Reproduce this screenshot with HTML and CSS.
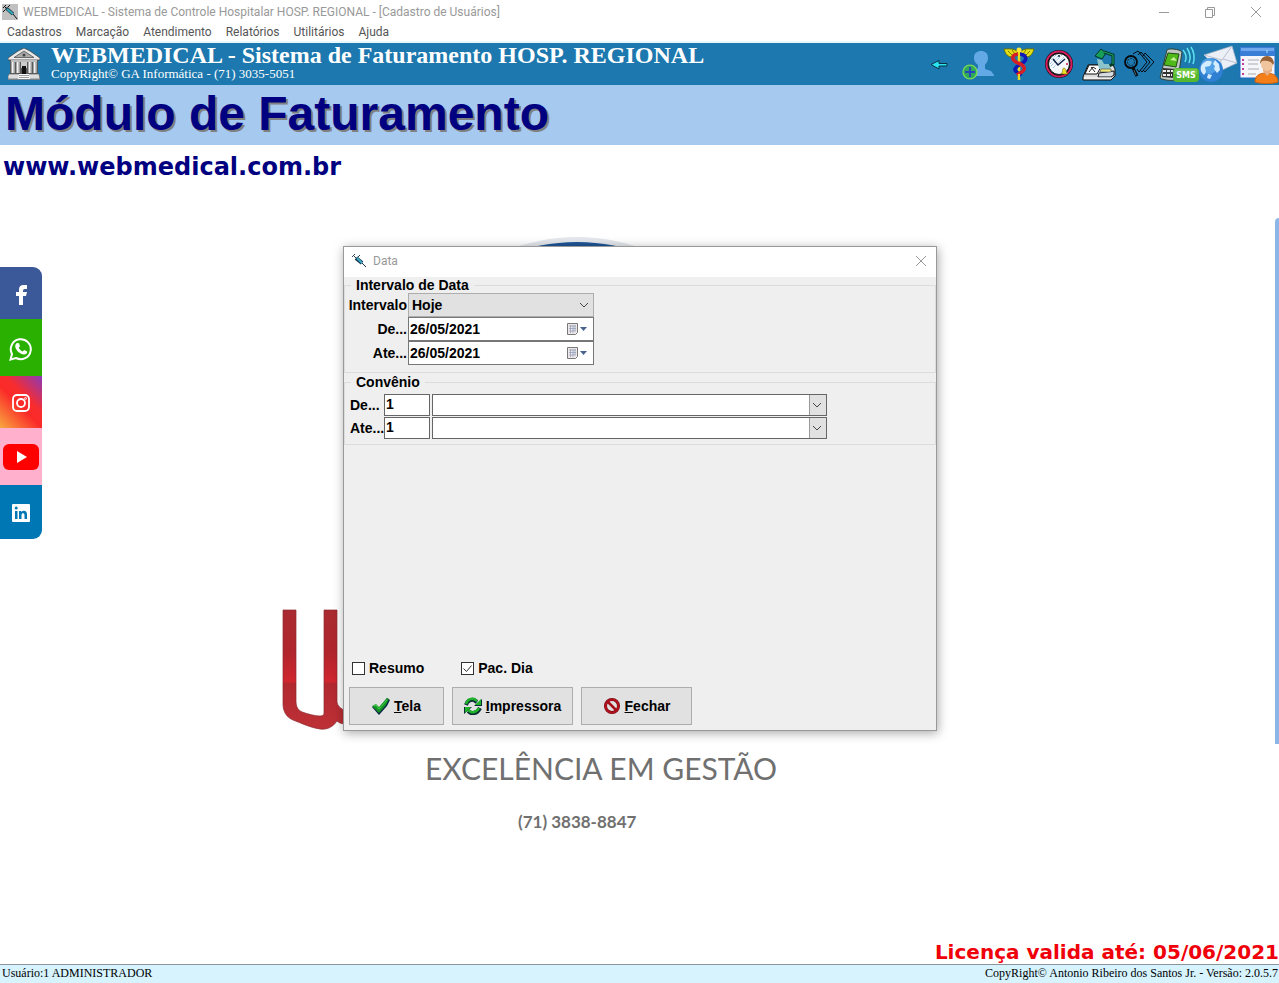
FILE: index.html
```html
<!DOCTYPE html>
<html lang="pt-BR">
<head>
<meta charset="utf-8">
<title>WEBMEDICAL - Sistema de Controle Hospitalar</title>
<link rel="stylesheet" href="styles.css">
</head>
<body>
<header class="titlebar">
  <svg class="app-icon" viewBox="0 0 16 16"><rect width="16" height="16" fill="#c0c0c0"/><path d="M1 4L4 1M2 2l3 3M1 8l2-2M8 1L6 3" stroke="#111"/><path d="M4 4l7 6" stroke="#234" stroke-width="3.500"/><path d="M5 5l6 5" stroke="#2fb0bf" stroke-width="2"/><path d="M11 10l4 5" stroke="#111"/></svg>
  <span class="titlebar-text">WEBMEDICAL - Sistema de Controle Hospitalar HOSP. REGIONAL - [Cadastro de Usuários]</span>
  <div class="window-controls">
    <button aria-label="Minimizar"><svg viewBox="0 0 12 12"><path d="M1 6.500h10"/></svg></button>
    <button aria-label="Restaurar"><svg viewBox="0 0 12 12"><path d="M1.500 3.500h7v8h-7zM3.500 3.500v-2h7v8h-2"/></svg></button>
    <button aria-label="Fechar janela"><svg viewBox="0 0 12 12"><path d="M1 1l10 10M11 1L1 11"/></svg></button>
  </div>
</header>
<nav class="menubar">
  <button>Cadastros</button><button>Marcação</button><button>Atendimento</button><button>Relatórios</button><button>Utilitários</button><button>Ajuda</button>
</nav>
<section class="banner">
  <svg class="bank" viewBox="0 0 32 32"><path d="M0 10L10 3l6-3 6 3 10 7v2H0z" fill="#e9e9e9" stroke="#444" stroke-width=".8"/><path d="M6 9.500L16 3l10 6.500z" fill="#aaa" stroke="#555" stroke-width=".8"/><circle cx="16" cy="7" r="1.500" fill="#444"/><path d="M2 12h28v14H2z" fill="#5b5b5b"/><path d="M3 13h26" stroke="#ddd" stroke-width="1.500"/><path d="M5 14v11M10 14v11M22 14v11M27 14v11" stroke="#f2f2f2" stroke-width="3"/><path d="M6 14v11M11 14v11M23 14v11M28 14v11" stroke="#999"/><path d="M13 14h6v6h-6z" fill="#ccc"/><path d="M14 18h4v8h-4z" fill="#111"/><path d="M1 26h11v5H0v-3zM20 26h11l1 5H20z" fill="#ddd" stroke="#555" stroke-width=".6"/><path d="M11 26h10l1 5H10z" fill="#fafafa"/><path d="M11 27.500h10M11 29.500h10M0 31.500h32" stroke="#888" stroke-width=".8"/></svg>
  <div class="banner-text">
    <h1>WEBMEDICAL - Sistema de Faturamento HOSP. REGIONAL</h1>
    <p>CopyRight© GA Informática - (71) 3035-5051</p>
  </div>
  <div class="toolbar">
    <button aria-label="Voltar"><svg viewBox="0 0 40 40"><path d="M12 20.500l8-4v3h8v2.500h-8v3z" fill="#2be4f2" stroke="#063243"/></svg></button>
    <button aria-label="Novo usuário"><svg viewBox="0 0 40 40"><path d="M15 14c0-5 3-7 7-7s7 2 7 7c0 4-2 5-3 7v4l6 2 3 4v1H16V26l3-2v-3c-2-2-4-3-4-7z" fill="#62a9e6"/><circle cx="11" cy="28" r="7" fill="#2ea85a" stroke="#86e050" stroke-width="1.200"/><path d="M11 23v10M6 28h10" stroke="#2746bd" stroke-width="2"/></svg></button>
    <button aria-label="Clínica"><svg viewBox="0 0 40 40"><path d="M19 8C15 4 10 5 5 5c1 3 2 7 7 8l6-2zM21 8c4-4 9-3 14-3-1 3-2 7-7 8l-6-2z" fill="#e4de18" stroke="#6d7400"/><path d="M9 7l4 4M13 6l3 4M31 7l-4 4M27 6l-3 4" stroke="#7b7d00"/><path d="M20 6v30" stroke="#eddb1b" stroke-width="2.500"/><circle cx="20" cy="6" r="2.500" fill="#ffe838"/><g fill="none" stroke-width="3.500"><path d="M21 10c7 1 8 6 1 10s-8 6-3 9l3 3" stroke="#1018b8"/><path d="M19 10c-7 1-7 6 0 9 8 3 8 7 2 10l-3 2" stroke="#d61f25"/></g><path d="M20 10v5M20 30v6" stroke="#eddb1b" stroke-width="2"/></svg></button>
    <button aria-label="Agenda"><svg viewBox="0 0 40 40"><circle cx="20" cy="20" r="14" fill="#111"/><circle cx="20" cy="20" r="12.500" fill="none" stroke="#d51e60" stroke-width="2"/><circle cx="20" cy="20" r="10.500" fill="#f5f8fb" stroke="#111"/><path d="M12 16l5-5M11 20l9-9M12 22l11-11M14 24L25 13" stroke="#73b2dc" stroke-dasharray="1 1"/><path d="M14 15l5 6 7-6" fill="none" stroke="#124" stroke-width="1.500"/><circle cx="20" cy="12" r="1" fill="#123"/><circle cx="28" cy="20" r="1" fill="#c14"/><path d="M22 30c2-1 1-6 3-6s2 5 4 6z" fill="#eee329" stroke="#765d05" stroke-width=".6"/></svg></button>
    <button aria-label="Consultório"><svg viewBox="0 0 40 40"><path d="M9 21h25l2 4v7l-4 4H4v-3z" fill="#ddd" stroke="#111"/><path d="M10 21h13l-5 9H6z" fill="#fff" stroke="#111"/><path d="M10 28l4-5 3 2M12 23l4 5" stroke="#222" fill="none"/><path d="M20 29l15-2v4l-3 2H19z" fill="#d6dce1" stroke="#111"/><path d="M16 12l6-7 5 4-4 6z" fill="#16a05a" stroke="#032"/><path d="M25 8l9 3v9l-4 2" fill="none" stroke="#063b24" stroke-width="3"/><path d="M25 8l9 3v9" fill="none" stroke="#18a965"/><path d="M18 15l5 1 2 4h5l2 5H20z" fill="#8bc4cb"/><path d="M22 25h10v3H21z" fill="#f0e978" stroke="#444" stroke-width=".6"/><path d="M5 34h27" stroke="#fff"/></svg></button>
    <button aria-label="Pesquisar"><svg viewBox="0 0 40 40" fill="none" stroke="#06090e"><path d="M14 10l5-3 9 11-8 10-2-3M19 11l3-3 9 10-8 10-2-2M24 12l2-3 9 9-9 10-2-2"/><circle cx="12" cy="18" r="6" stroke-width="1.800"/><circle cx="12" cy="18" r="3.500" stroke-width=".7" stroke-dasharray="2 1"/><path d="M14 24l4 8" stroke-width="3"/><path d="M15 26l2 5" stroke="#688" stroke-width=".7"/></svg></button>
    <button aria-label="Enviar SMS"><svg viewBox="0 0 40 40"><path d="M8 6c1-2 13-1 15 2l-3 20-4 8C12 37 4 36 1 34z" fill="#bfc8c4" stroke="#304030"/><path d="M9 9l11 1-3 13-12-2z" fill="#4fb81b" stroke="#214d11"/><path d="M11 16l4-3 3 4z" fill="#c7f298"/><path d="M4 24l13 1-2 9-12-1z" fill="#333"/><path d="M4 27h10M4 31h9" stroke="#eee" stroke-width="2" stroke-dasharray="3 1"/><g fill="none" stroke="#5fe0ee" stroke-width="1.500"><path d="M24 6q5 6 2 12M28 4q5 8 2 15M32 3q5 8 2 17"/></g><path d="M26 6q5 6 2 12M30 3q5 8 2 16" stroke="#167c9f" fill="none"/><rect x="14" y="24" width="26" height="14" rx="4" fill="#56b82c"/><path d="M16 25h22v5H15z" fill="#77cb4a"/><text x="27" y="34" text-anchor="middle" class="sms-label">SMS</text></svg></button>
    <button aria-label="Enviar e-mail"><svg viewBox="0 0 40 40"><path d="M5 11L33 2l5 17-17 8z" fill="#eceff5" stroke="#a7b3c9" stroke-width=".7"/><path d="M5 11l18 5L33 2M38 19l-14-4M21 27l1-11" fill="none" stroke="#b9c2d2"/><circle cx="12" cy="26" r="12" fill="#2f7fd2"/><circle cx="10" cy="22" r="8" fill="#68b5f2" opacity=".6"/><path d="M2 22c4-6 8-6 11-4l-2 4-5 1 1 5-2 3c-3-3-4-5-3-9zM16 16l4 4 1 6-3 3-3-4 1-3-2-2zM9 30l4 1-2 4-3-1z" fill="#d4ecff"/></svg></button>
    <button aria-label="Cadastro"><svg viewBox="0 0 40 40"><rect x="1" y="3" width="35" height="31" rx="1" fill="#f5f6fb" stroke="#2368c5"/><path d="M1 3h35v9H1z" fill="#397fd7"/><path d="M2 4h33v3H2z" fill="#70a8eb"/><path d="M28 6v3" stroke="#b9e3ff"/><g stroke="#c13b9b" stroke-width="2"><path d="M3 16h2M3 20h2M3 25h2M3 30h2"/></g><path d="M9 16h11M9 20h10M9 25h11M9 30h8" stroke="#aaa"/><path d="M16 38c0-6 4-9 11-9s12 3 12 9c-6 2-17 2-23 0z" fill="#f47f18" stroke="#ce6110"/><path d="M24 27l4 5 5-5v-5h-9z" fill="#e8ae83"/><ellipse cx="28" cy="20" rx="6" ry="7" fill="#f0c59e"/><path d="M21 20c0-10 13-11 14-1l-1 2c-2-4-5-5-11-4z" fill="#986136"/></svg></button>
  </div>
</section>
<section class="module"><h2>Módulo de Faturamento</h2></section>
<main class="desktop">
  <a class="site" href="#">www.webmedical.com.br</a>

  <svg class="artwork" viewBox="0 0 600 520"><circle cx="297" cy="198" r="191" fill="#e4e8ec"/><circle cx="297" cy="200" r="188" fill="#1e5596"/>
    <defs><linearGradient id="red" x1="0" y1="0" x2="0" y2="1"><stop offset="0" stop-color="#a92b31"/><stop offset=".35" stop-color="#b0262c"/><stop offset=".6" stop-color="#d0262f"/><stop offset=".62" stop-color="#b1292f"/><stop offset="1" stop-color="#bd3036"/></linearGradient></defs>
    <path d="M3 380h13v91c0 6 2 9 6 11 6 2 13 4 18 4 3 0 4-1 4-3V380h13v91c0 5 4 8 9 10v13c-4 0-7-1-9-3-4 6-10 9-17 8-9-1-19-6-27-9C6 487 3 481 3 474z" fill="url(#red)" stroke="#8c2b30" stroke-width=".7"/></svg>
  <div class="slogan"><p class="slogan-main">EXCELÊNCIA EM GESTÃO</p><p class="slogan-phone">(71) 3838-8847</p></div>
  <div class="side-panel"></div>

  <nav class="social">
    <a class="facebook" href="#" aria-label="Facebook"><svg viewBox="0 0 24 24" fill="#fff"><path d="M10 22v-9H7V9h3V7c0-4 2-5 5-5h3v4h-2c-2 0-2 1-2 3h4l-1 4h-3v9z"/></svg></a>
    <a class="whatsapp" href="#" aria-label="WhatsApp"><svg viewBox="0 0 24 24"><path d="M1.500 22.500L3 17a10 10 0 1 1 4 4z" fill="none" stroke="#fff" stroke-width="2"/><path d="M8 6l2 .3 1 3-1.300 1.500c1 2 2.300 3 4 3.800l1.500-1.500 3 1.400c.2 2-1.500 3-3 3-5-.5-9-5-9-8.500 0-1 .8-2.500 1.800-3z" fill="#fff"/></svg></a>
    <a class="instagram" href="#" aria-label="Instagram"><svg viewBox="0 0 24 24" fill="none" stroke="#fff" stroke-width="1.800"><rect x="4" y="4" width="16" height="16" rx="4"/><circle cx="12" cy="12" r="4"/><circle cx="16.500" cy="7.500" r=".4"/></svg></a>
    <a class="youtube" href="#" aria-label="YouTube"><svg viewBox="0 0 36 26"><rect width="36" height="26" rx="6" fill="#f00"/><path d="M14 7l10 6-10 6z" fill="#fff"/></svg></a>
    <a class="linkedin" href="#" aria-label="LinkedIn"><svg viewBox="0 0 24 24"><rect x="3" y="3" width="18" height="18" rx="1" fill="#fff"/><path d="M6 10h2.500v8H6zM10 10h2.300v1.200c1.700-2.300 5.700-1.700 5.700 2V18h-2.500v-4c0-2.300-3-2.300-3 0v4H10z" fill="#0077b5"/><circle cx="7.200" cy="7" r="1.500" fill="#0077b5"/></svg></a>
  </nav>

  <section class="dialog" role="dialog" aria-labelledby="dialog-title">
    <header class="dialog-header">
      <svg class="dialog-icon" viewBox="0 0 16 16"><path d="M1 4l3-3M2 2l4 4M4 7l5-5" stroke="#345"/><path d="M5 5l6 5" stroke="#16364c" stroke-width="4"/><path d="M6 5l5 5" stroke="#38acc4" stroke-width="2"/><path d="M11 10l4 4" stroke="#16364c"/></svg>
      <span id="dialog-title">Data</span>
      <button aria-label="Fechar diálogo"><svg viewBox="0 0 12 12"><path d="M1 1l10 10M11 1L1 11"/></svg></button>
    </header>
    <form class="dialog-body">
      <fieldset class="group period">
        <legend>Intervalo de Data</legend>
        <label for="interval">Intervalo</label>
        <div class="combo combo-gray"><select id="interval"><option>Hoje</option></select><svg viewBox="0 0 10 6"><path d="M1 1l4 4 4-4"/></svg></div>
        <label for="from">De...</label>
        <div class="date"><input id="from" value="26/05/2021"><button type="button" aria-label="Abrir calendário inicial"><svg viewBox="0 0 20 12"><path d="M.5 .5h10v9l-2 2h-8z" fill="#eee9e8" stroke="#777"/><path d="M2 3h7M2 5.500h7M2 8h7M3.500 2v8M6 2v8M8 2v6" stroke="#8d9bb7" stroke-width=".7"/><path d="M13 4h7l-3.500 4z" fill="#47628c"/></svg></button></div>
        <label for="to">Ate...</label>
        <div class="date"><input id="to" value="26/05/2021"><button type="button" aria-label="Abrir calendário final"><svg viewBox="0 0 20 12"><path d="M.5 .5h10v9l-2 2h-8z" fill="#eee9e8" stroke="#777"/><path d="M2 3h7M2 5.500h7M2 8h7M3.500 2v8M6 2v8M8 2v6" stroke="#8d9bb7" stroke-width=".7"/><path d="M13 4h7l-3.500 4z" fill="#47628c"/></svg></button></div>
      </fieldset>
      <fieldset class="group plan">
        <legend>Convênio</legend>
        <label for="plan-from">De...</label>
        <input id="plan-from" class="code" value="1">
        <div class="combo combo-white"><select aria-label="Convênio inicial"><option></option></select><svg viewBox="0 0 10 6"><path d="M1 1l4 4 4-4"/></svg></div>
        <label for="plan-to">Ate...</label>
        <input id="plan-to" class="code" value="1">
        <div class="combo combo-white"><select aria-label="Convênio final"><option></option></select><svg viewBox="0 0 10 6"><path d="M1 1l4 4 4-4"/></svg></div>
      </fieldset>
      <div class="checks">
        <label class="check"><input type="checkbox"><svg viewBox="0 0 13 13"><path d="M2.500 6.500l3 3 5-6"/></svg><span>Resumo</span></label>
        <label class="check"><input type="checkbox" checked><svg viewBox="0 0 13 13"><path d="M2.500 6.500l3 3 5-6"/></svg><span>Pac. Dia</span></label>
      </div>
      <div class="actions">
        <button type="button" class="action-view"><svg viewBox="0 0 18 18"><path d="M0 10l4-2 3 3 8-10 3 2-3 6-8 9z" fill="#0a2348"/><path d="M0 9l4-2 3 3 8-9 2 1-3 6-7 8z" fill="#159424"/><path d="M2 9l2-1 3 4 8-9" fill="none" stroke="#46d84c"/></svg><span><u>T</u>ela</span></button>
        <button type="button" class="action-print"><svg viewBox="0 0 18 18"><g fill="none" stroke="#092b33" stroke-width="4"><path d="M2 8q2-6 8-5l3 2M16 11q-3 6-9 5l-3-2"/></g><path d="M18 2v7h-8zM0 17v-7h8z" fill="#092b33"/><g fill="none" stroke="#1eb42a" stroke-width="2.500"><path d="M2 7q2-6 8-5l3 2M15 11q-3 5-8 4l-3-2"/></g><path d="M17 2v6h-6zM1 16v-6h6z" fill="#1eb42a"/></svg><span><u>I</u>mpressora</span></button>
        <button type="button" class="action-close"><svg viewBox="0 0 18 18" fill="none"><circle cx="9" cy="9" r="6.500" stroke="#720b13" stroke-width="3"/><circle cx="9" cy="9" r="6.500" stroke="#b5121e" stroke-width="2"/><path d="M4 4l10 10" stroke="#a50f19" stroke-width="2.500"/></svg><span><u>F</u>echar</span></button>
      </div>
    </form>
  </section>
  <p class="license">Licença valida até: 05/06/2021</p>
</main>
<footer class="statusbar"><span>Usuário:1 ADMINISTRADOR</span><span>CopyRight© Antonio Ribeiro dos Santos Jr. - Versão: 2.0.5.7</span></footer>
</body>
</html>
```
FILE: styles.css
```css
* { box-sizing: border-box; }
body {
  margin: 0;
  min-height: 100vh;
  display: flex;
  flex-direction: column;
  overflow: hidden;
  background: #fff;
  font-family: Roboto, "Noto Sans", sans-serif;
  font-size: 12px;
}
h1, h2, p { margin: 0; }
button { font: inherit; color: inherit; border: 0; background: none; padding: 0; }
svg { display: block; }

.titlebar { display: flex; align-items: center; height: 23px; padding-left: 2px; color: #999; }
.app-icon { width: 16px; height: 16px; fill: none; }
.titlebar-text { flex: 1; padding-left: 5px; white-space: nowrap; }
.window-controls { display: flex; }
.window-controls button { width: 46px; height: 21px; display: grid; place-items: center; }
.window-controls svg, .dialog-header button svg { width: 12px; height: 12px; fill: none; stroke: #999; }

.menubar { display: flex; height: 20px; border-bottom: 2px solid #e6f9fd; color: #555; }
.menubar button { padding: 0 7px; }

.banner { display: flex; align-items: center; height: 42px; background: #1c78ae; color: #fff; font-family: "Liberation Serif", serif; }
.bank { width: 32px; height: 32px; margin: 0 11px 0 8px; }
.banner-text { flex: 1; padding-bottom: 4px; white-space: nowrap; }
.banner h1 { font-size: 24px; line-height: 24px; }
.banner p { font-size: 13px; line-height: 14px; }
.toolbar { display: flex; }
.toolbar svg { width: 40px; height: 40px; }
.sms-label { font: bold 8px "DejaVu Sans", sans-serif; fill: #fff; }

.module { height: 60px; padding-left: 5px; background: #a6c9ef; }
.module h2 { font: bold 48px/58px "Liberation Sans", sans-serif; color: #000080; text-shadow: 2px 2px 0 #808080; }

.desktop { position: relative; flex: 1; display: flex; flex-direction: column; justify-content: space-between; }
.site { padding: 7px 3px; font: bold 24px/30px "DejaVu Sans", sans-serif; color: #000080; text-decoration: none; }
.license { text-align: right; font: bold 20px/24px "DejaVu Sans", sans-serif; color: #f00008; }

.artwork { position: absolute; left: 280px; top: 85px; width: 600px; height: 520px; }
.slogan { position: absolute; left: 425px; top: 600px; color: #707070; font-family: Lato, sans-serif; white-space: nowrap; }
.slogan-main { font-size: 30px; line-height: 46px; }
.slogan-phone { padding-left: 93px; font-size: 17px; line-height: 62px; font-weight: bold; }
.side-panel { position: absolute; right: 0; top: 73px; width: 4px; height: 526px; background: #8db6e8; border-radius: 4px 0 0 0; }

.social { position: absolute; left: 0; top: 122px; width: 42px; border-radius: 0 9px 9px 0; overflow: hidden; }
.social a { display: grid; place-items: center; height: 52px; padding-top: 2px; }
.social svg { width: 24px; height: 24px; }
.social .facebook { padding-top: 4px; background: #3b5998; }
.social .whatsapp { height: 57px; background: #29b000; }
.social .instagram { background: linear-gradient(45deg, #f9a840, #fa2a28 45%, #f92c2d 60%, #8a3ab9); }
.social .youtube { height: 57px; padding-top: 0; background: #ffb0cc; }
.social .youtube svg { width: 36px; height: 26px; }
.social .linkedin { height: 54px; background: #0077b5; }

.dialog { position: absolute; left: 343px; top: 101px; width: 594px; border: 1px solid #999; background: #efefef; box-shadow: 1px 2px 10px rgba(0, 0, 0, .35); }
.dialog-header { display: flex; align-items: center; height: 30px; padding: 0 9px 2px 7px; background: #fff; color: #999; }
.dialog-icon { width: 16px; height: 16px; fill: none; }
.dialog-header span { flex: 1; padding-left: 6px; }
.dialog-body { font: bold 14px/16px "Liberation Sans", sans-serif; color: #000; }

.group { margin: 0; padding: 0 0 0 5px; border: 1px solid #dcdcdc; display: grid; align-items: center; justify-content: start; }
.group legend { margin-left: 1px; padding: 0 5px; }
.period { grid-template-columns: 58px 186px; grid-auto-rows: 24px; padding-bottom: 7px; }
.period label { display: flex; justify-content: flex-end; padding-right: 1px; }
.plan { margin-top: 1px; grid-template-columns: 34px 46px 397px; grid-auto-rows: 22px; row-gap: 1px; padding-top: 4px; padding-bottom: 5px; }
.plan .combo { margin-left: 2px; }

input, select { width: 100%; min-width: 0; height: 100%; margin: 0; border: 0; border-radius: 0; background: none; font: inherit; color: #000; outline: 0; }
.code { padding: 0 1px 2px; background: #fff; border: 1px solid #666; }
.combo { display: grid; align-items: center; height: 100%; }
.combo select { grid-area: 1 / 1; appearance: none; padding: 0 3px; }
.combo svg { grid-area: 1 / 1; justify-self: end; width: 10px; height: 6px; margin-right: 4px; fill: none; stroke: #444; pointer-events: none; }
.combo-gray { background: #e1e1e1; border: 1px solid #adadad; }
.combo-white { background: linear-gradient(to left, #e1e1e1 16px, #999 16px, #999 17px, #fff 17px); border: 1px solid #666; }
.date { display: flex; align-items: center; height: 100%; padding-right: 6px; background: #fff; border: 1px solid #777; }
.date input { padding: 0 1px; }
.date svg { width: 20px; height: 12px; }

.checks { display: flex; gap: 37px; padding: 215px 8px 0; }
.check { display: grid; grid-template-columns: 13px auto; align-items: center; column-gap: 4px; }
.check input { grid-area: 1 / 1; appearance: none; width: 13px; height: 13px; background: #fff; border: 1px solid #333; }
.check svg { grid-area: 1 / 1; width: 13px; height: 13px; fill: none; stroke: #333; pointer-events: none; visibility: hidden; }
.check input:checked + svg { visibility: visible; }
.actions { display: flex; gap: 8px; padding: 11px 5px 5px; }
.actions button { display: flex; align-items: center; justify-content: center; gap: 4px; height: 38px; background: #e1e1e1; border: 1px solid #adadad; }
.actions svg { width: 18px; height: 18px; }
.actions .action-view { width: 95px; }
.actions .action-print { width: 121px; }
.actions .action-close { width: 111px; }

.statusbar { display: flex; justify-content: space-between; height: 19px; padding: 0 1px 0 2px; background: #d6f3fe; border-top: 1px solid #8a9499; font: 12px/17px "Liberation Serif", serif; color: #000; }
```
